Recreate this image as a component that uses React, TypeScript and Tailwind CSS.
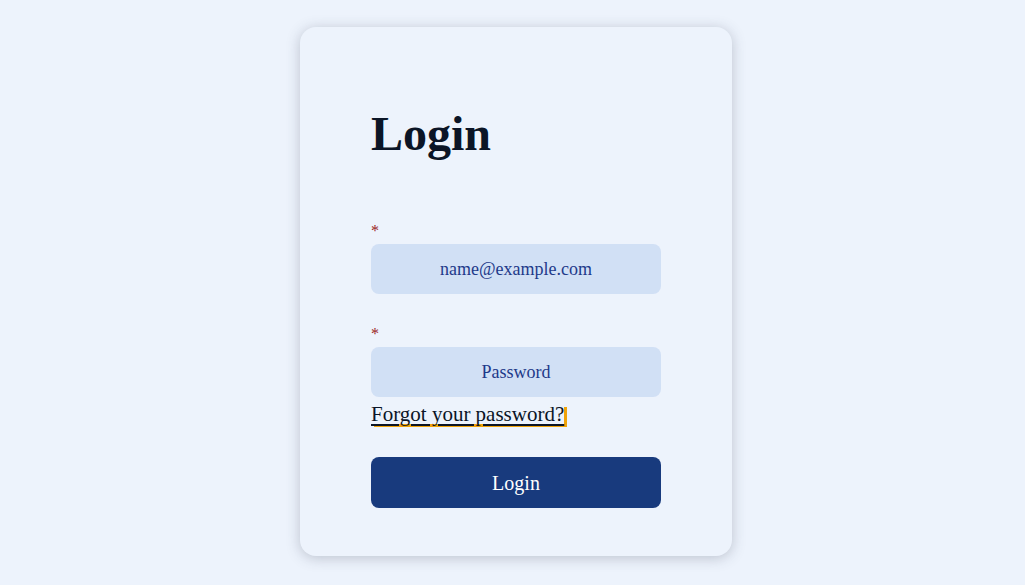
import React from "react";

export default function App() {
  return (
    <div
      className="min-h-[585px] w-full bg-[#edf3fc] flex justify-center items-start pl-[7px] pt-[27px]"
      style={{ fontFamily: '"Liberation Serif", "DejaVu Serif", serif' }}
    >
      <div className="w-[432px] rounded-[16px] bg-[#edf3fc] shadow-[0_2px_14px_rgba(60,70,90,0.28)] pt-[83px] px-[71px] pb-[48px] flex flex-col">
        <h1 className="text-[48px] leading-[48px] font-bold text-[#0b1526]">Login</h1>
        <div className="mt-[63px] h-[20px] mb-[3px] text-[16px] leading-[20px] text-[#9b1c1c]">*</div>
        <input
          className="h-[50px] shrink-0 w-full rounded-[8px] bg-[#d1e0f5] text-center text-[18px] text-[#1e3a8a] placeholder:text-[#1e3a8a] outline-none"
          placeholder="name@example.com"
          style={{ fontFamily: '"Liberation Serif", serif' }}
        />
        <div className="mt-[30px] h-[20px] mb-[3px] text-[16px] leading-[20px] text-[#9b1c1c]">*</div>
        <input
          type="password"
          className="h-[50px] shrink-0 w-full rounded-[8px] bg-[#d1e0f5] text-center text-[18px] text-[#1e3a8a] placeholder:text-[#1e3a8a] outline-none"
          placeholder="Password"
          style={{ fontFamily: '"Liberation Serif", serif' }}
        />
        <div className="mt-[7px] h-[20px]">
          <a
            href="#"
            className="inline-block text-[21px] leading-[20px] text-[#0b1526] underline decoration-[1.5px] underline-offset-[3px] shadow-[3px_3px_0_#f0a30a]"
          >
            Forgot your password?
          </a>
        </div>
        <button
          className="mt-[33px] h-[51px] shrink-0 w-full rounded-[8px] bg-[#183a7d] text-white text-[20px] font-medium"
          style={{ fontFamily: '"Liberation Serif", serif' }}
        >
          Login
        </button>
      </div>
    </div>
  );
}
